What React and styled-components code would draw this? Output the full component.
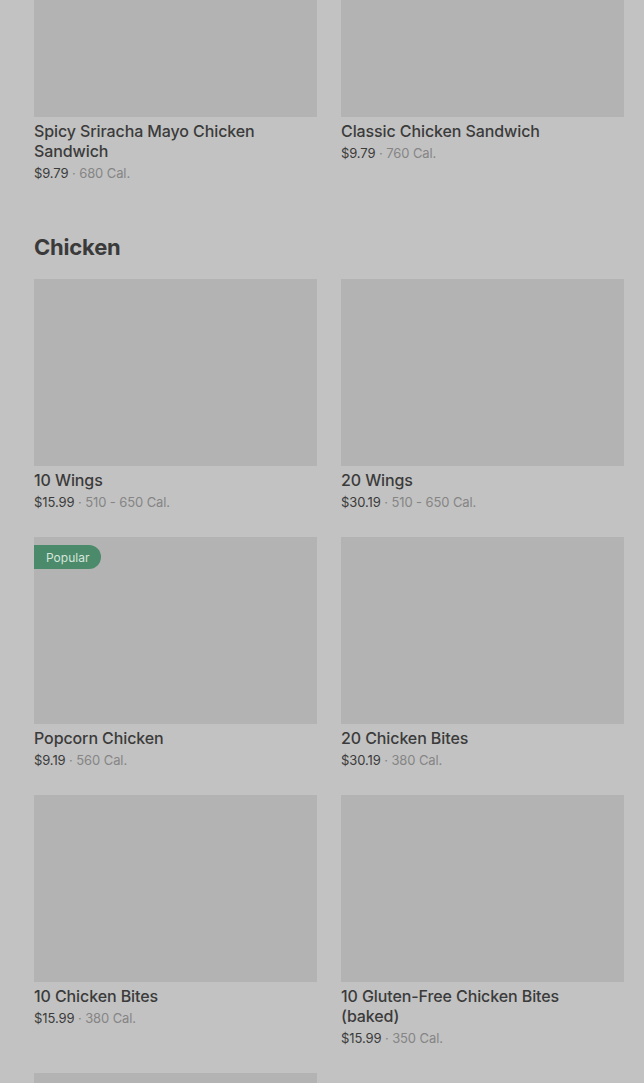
import React from "react";
import styled, { createGlobalStyle } from "styled-components";

const GlobalStyle = createGlobalStyle`
  html, body {
    margin: 0;
    padding: 0;
    background: #c2c2c2;
  }
  body {
    font-family: Inter, "Noto Sans", Roboto, sans-serif;
    color: #3b3b3b;
    -webkit-font-smoothing: antialiased;
  }
`;

const Page = styled.div`
  width: 644px;
  height: 1083px;
  overflow: hidden;
  padding: 0 20px 0 34px;
  box-sizing: border-box;
`;

const Grid = styled.div`
  display: grid;
  grid-template-columns: 283px 283px;
  column-gap: 24px;
  row-gap: 25px;
  align-items: start;
`;

const TopGrid = styled(Grid)`
  margin-top: -70px;
`;

const SectionTitle = styled.h2`
  margin: 48px 0 16px;
  font-size: 22px;
  line-height: 32px;
  font-weight: 700;
  color: #3a3a3a;
  letter-spacing: -0.2px;
`;

const Card = styled.div`
  display: flex;
  flex-direction: column;
`;

const Thumb = styled.div`
  position: relative;
  height: 187px;
  background: #b3b3b3;
`;

const Badge = styled.span`
  position: absolute;
  left: 0;
  top: 8px;
  height: 24px;
  padding: 0 12px;
  display: flex;
  align-items: center;
  background: #4b8a6a;
  color: #d6e6dc;
  font-size: 12px;
  border-radius: 0 12px 12px 0;
`;

const Name = styled.div`
  margin-top: 4px;
  font-size: 16px;
  line-height: 20px;
  font-weight: 500;
  color: #3b3b3b;
  letter-spacing: -0.1px;
  padding-right: 40px;
`;

const Meta = styled.div`
  margin-top: 2px;
  font-size: 13px;
  line-height: 20px;
  color: #3b3b3b;
  letter-spacing: -0.1px;
`;

const Cal = styled.span`
  color: #858585;
`;

const Item = ({ name, price, cal, popular }) => (
  <Card>
    <Thumb>{popular && <Badge>Popular</Badge>}</Thumb>
    {name && <Name>{name}</Name>}
    {price && (
      <Meta>
        {price} <Cal>· {cal}</Cal>
      </Meta>
    )}
  </Card>
);

const sandwiches = [
  { name: "Spicy Sriracha Mayo Chicken Sandwich", price: "$9.79", cal: "680 Cal." },
  { name: "Classic Chicken Sandwich", price: "$9.79", cal: "760 Cal." },
];

const chicken = [
  { name: "10 Wings", price: "$15.99", cal: "510 - 650 Cal." },
  { name: "20 Wings", price: "$30.19", cal: "510 - 650 Cal." },
  { name: "Popcorn Chicken", price: "$9.19", cal: "560 Cal.", popular: true },
  { name: "20 Chicken Bites", price: "$30.19", cal: "380 Cal." },
  { name: "10 Chicken Bites", price: "$15.99", cal: "380 Cal." },
  { name: "10 Gluten-Free Chicken Bites (baked)", price: "$15.99", cal: "350 Cal." },
  {},
];

export default function App() {
  return (
    <>
      <GlobalStyle />
      <Page>
        <TopGrid>
          {sandwiches.map((s) => (
            <Item key={s.name} {...s} />
          ))}
        </TopGrid>
        <SectionTitle>Chicken</SectionTitle>
        <Grid>
          {chicken.map((c, i) => (
            <Item key={i} {...c} />
          ))}
        </Grid>
      </Page>
    </>
  );
}
